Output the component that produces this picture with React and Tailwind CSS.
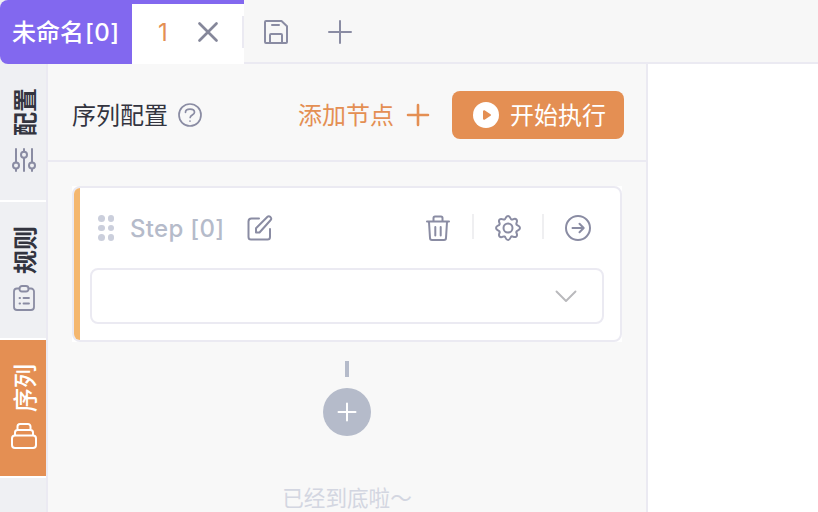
const cjk = "font-['Noto_Sans_CJK_SC','Noto_Sans',sans-serif]";

function Icon({ size = 26, sw = 2, className = '', children }) {
  return (
    <svg width={size} height={size} viewBox={`0 0 ${size} ${size}`} fill="none" stroke="currentColor"
      strokeWidth={sw} strokeLinecap="round" strokeLinejoin="round" className={`block shrink-0 ${className}`}>
      {children}
    </svg>
  );
}

function SideItem({ label, active, children }) {
  return (
    <div className={`flex h-[138px] w-[46px] flex-col items-center border-b-2 border-white pl-0.5 pt-6 ${active ? 'bg-[#e48f53] text-white' : 'bg-[#eff0f3] text-[#8a8ca3]'}`}>
      <span className={`h-12 rotate-180 whitespace-nowrap pl-px text-[24px] leading-[24px] [text-orientation:sideways] [writing-mode:vertical-rl] ${active ? 'font-medium' : 'font-bold text-[#33343f]'}`}>
        {label}
      </span>
      <div className="mt-[11px]">{children}</div>
    </div>
  );
}

function TabBar() {
  return (
    <header className="flex h-16 bg-[#f7f7f7]">
      <div className="h-16 w-[244px] bg-[#eff0f3]">
        <div className="flex h-16 overflow-hidden rounded-l-[8px] bg-[#8268ef]">
          <div className="flex w-[132px] items-center whitespace-nowrap pb-0.5 pl-3 text-[24px] font-medium leading-8 text-white">
            未命名<span className="pl-px pt-[3px] font-['Inter',sans-serif] tracking-[0.4px]">[0]</span>
          </div>
          <div className="mt-1 flex h-[60px] w-28 items-center bg-white pb-1">
            <span className="ml-[26px] w-[13px] pt-0.5 font-['Inter',sans-serif] text-[24px] leading-8 text-[#e48f53]">1</span>
            <Icon size={22} sw={2.7} className="ml-[26px] text-[#85879a]"><path d="M2.500 2.500l17 17M19.500 2.500l-17 17" /></Icon>
            <div className="ml-auto h-8 w-0.5 bg-[#ebeaf2]" />
          </div>
        </div>
      </div>
      <div className="flex flex-1 items-center border-b-2 border-[#ebeaf2] pl-[19px] pt-0.5 text-[#8a8ca3]">
        <Icon>
          <path d="M3 2h15.500l5.500 5.200V23a1 1 0 0 1-1 1H3a1 1 0 0 1-1-1V3a1 1 0 0 1 1-1z" />
          <path d="M7 24v-8a1 1 0 0 1 1-1h10a1 1 0 0 1 1 1v8M9 6h7" />
        </Icon>
        <Icon sw={2} className="ml-[38px]"><path d="M13 2v22M2 13h22" /></Icon>
      </div>
    </header>
  );
}

function Sidebar() {
  return (
    <nav className="w-12 shrink-0 border-r-2 border-[#ebeaf2] bg-[#eff0f3]">
      <SideItem label="配置">
        <Icon>
          <path d="M5 2v13.500M5 22v2M13 2v2.500M13 11v13M21 2v13.500M21 22v2" />
          <circle cx="5" cy="18.500" r="3" /><circle cx="13" cy="7.700" r="3" /><circle cx="21" cy="18.500" r="3" />
        </Icon>
      </SideItem>
      <SideItem label="规则">
        <Icon sw={1.8}>
          <path d="M8.500 3.500H6A3 3 0 0 0 3 6.500V22a3 3 0 0 0 3 3h14a3 3 0 0 0 3-3V6.500a3 3 0 0 0-3-3h-2.500" />
          <rect x="8.500" y="1" width="9" height="5.500" rx="2.500" />
          <path d="M8.500 13h.6M12.500 13h5.500M8.500 18.500h.6M12.500 18.500h5.500" />
        </Icon>
      </SideItem>
      <SideItem label="序列" active>
        <Icon sw={2}>
          <rect x="1" y="12.500" width="24" height="12.500" rx="3" />
          <path d="M4 12V9.500A2.500 2.500 0 0 1 6.500 7h13A2.500 2.500 0 0 1 22 9.500V12M6.500 7V3.500a2.500 2.500 0 0 1 2.500-2.500h8A2.500 2.500 0 0 1 19.500 3.500v3.500" />
        </Icon>
      </SideItem>
    </nav>
  );
}

function StepCard() {
  return (
    <div className="mx-6 mt-6 w-[550px] bg-white">
      <div className="flex h-[156px] overflow-hidden rounded-[8px] border-2 border-[#ebeaf2] bg-white">
        <div className="w-1.5 shrink-0 bg-[#f4b76f]" />
        <div className="flex-1 pl-2.5 pr-4">
          <div className="flex h-20 items-center text-[#8a8ca3]">
            <div className="ml-2 grid grid-cols-2 gap-x-[3px] gap-y-[3px]">
              {[0, 1, 2, 3, 4, 5].map((i) => <span key={i} className="size-[6.500px] rounded-full bg-[#cbcfdc]" />)}
            </div>
            <span className="ml-4 w-[96px] whitespace-nowrap pt-0.5 font-['Inter',sans-serif] text-[24px] font-medium leading-8 tracking-[0.3px] text-[#b5bbca]">Step [0]</span>
            <Icon className="ml-[21px]">
              <path d="M12 3.500H4.500a3 3 0 0 0-3 3V22a2.500 2.500 0 0 0 2.500 2.500h16.500a2.500 2.500 0 0 0 2.500-2.500v-8" />
              <path d="M9 17.500v-4.200L20.500 1.800a1.800 1.800 0 0 1 2.600 0l.6.6a1.800 1.800 0 0 1 0 2.600L12.500 17.500z" />
            </Icon>
            <Icon className="ml-auto">
              <path d="M2 6.500h22M8.500 6V3a1.500 1.500 0 0 1 1.500-1.500h6A1.500 1.500 0 0 1 17.500 3v3M4 7l1 16a2 2 0 0 0 2 2h12a2 2 0 0 0 2-2l1-16M10.300 12v8.500M15.700 12v8.500" />
            </Icon>
            <div className="mb-1 ml-[21px] h-[25px] w-0.5 bg-[#efeff1]" />
            <Icon className="ml-[21px]">
              <circle cx="13" cy="13" r="4.500" />
              <path d="M13 1c1.600 0 2.100 1.200 2.600 2.500.4 1 1.300 1.400 2.300.9 1.300-.6 2.500-1 3.500.1s.7 2.200.1 3.500c-.4 1-.1 1.900.9 2.300C23.700 10.900 25 11.400 25 13s-1.300 2.100-2.600 2.700c-1 .4-1.300 1.300-.9 2.300.6 1.300 1 2.500-.1 3.500s-2.200.7-3.500.1c-1-.4-1.900-.1-2.300.9C15.100 23.800 14.600 25 13 25s-2.100-1.200-2.600-2.500c-.4-1-1.300-1.300-2.300-.9-1.300.6-2.500 1-3.500-.1s-.7-2.200-.1-3.500c.4-1 .1-1.900-.9-2.300C2.300 15.100 1 14.600 1 13s1.300-2.100 2.600-2.700c1-.4 1.300-1.300.9-2.300-.6-1.300-1-2.500.1-3.500s2.200-.7 3.500-.1c1 .5 1.900.1 2.300-.9C10.900 2.200 11.400 1 13 1z" />
            </Icon>
            <div className="mb-1 ml-[21px] h-[25px] w-0.5 bg-[#efeff1]" />
            <Icon className="ml-[21px] mr-[13px]">
              <circle cx="13" cy="13" r="12" /><path d="M7.500 13h11M14.500 8.800l4.200 4.200-4.200 4.200" />
            </Icon>
          </div>
          <div className="flex h-14 w-[514px] items-center justify-end rounded-[8px] border-2 border-[#ebeaf2] bg-white pr-[23px]">
            <Icon sw={1.9} className="text-[#b9b9bc]"><path d="M3.500 8.500L13 18l9.500-9.500" /></Icon>
          </div>
        </div>
      </div>
    </div>
  );
}

export default function App() {
  return (
    <div className={`flex h-[512px] w-[818px] flex-col overflow-hidden bg-white ${cjk}`}>
      <TabBar />
      <div className="flex min-h-0 flex-1">
        <Sidebar />
        <main className="flex w-[600px] shrink-0 flex-col border-r-2 border-[#ebeaf2] bg-[#f8f8f8]">
          <div className="flex h-[98px] shrink-0 items-center border-b-2 border-[#ebeaf2] pl-6 pr-[22px] pt-1.5">
            <span className="pb-0.5 text-[24px] leading-8 text-[#33343f]">序列配置</span>
            <Icon sw={1.7} className="ml-[9px] text-[#8a8ca3]">
              <circle cx="13" cy="13" r="11" />
              <path d="M8.500 10.300c0-4.300 9-4.300 9 0 0 2.700-4.300 2.700-4.300 5.200M13 19v.1" />
            </Icon>
            <span className="ml-auto pb-0.5 text-[24px] leading-8 text-[#e48f53]">添加节点</span>
            <Icon sw={2.6} className="ml-[11px] text-[#e48f53]"><path d="M13 3v20M3 13h20" /></Icon>
            <button className="ml-[21px] flex h-12 w-[172px] items-center rounded-[8px] bg-[#e48f53] pl-[21px] text-[24px] leading-8 text-white">
              <svg width="26" height="26" viewBox="0 0 26 26" className="mr-[11px] shrink-0">
                <circle cx="13" cy="13" r="13" fill="#fff" />
                <path d="M11 9.200v7.600l6-3.800z" fill="#e48f53" stroke="#e48f53" strokeWidth="2" strokeLinejoin="round" />
              </svg>
              <span className="pb-0.5">开始执行</span>
            </button>
          </div>
          <StepCard />
          <div className="flex flex-col items-center pt-[19px]">
            <div className="h-4 w-1 bg-[#b5bbca]" />
            <div className="mt-[11px] flex size-12 items-center justify-center rounded-full bg-[#b5bbca] text-white">
              <Icon><path d="M13 4.500v17M4.500 13h17" /></Icon>
            </div>
            <span className="mt-[45px] whitespace-nowrap text-[21.600px] leading-8 text-[#d3d6e1]">已经到底啦～</span>
          </div>
        </main>
      </div>
    </div>
  );
}
